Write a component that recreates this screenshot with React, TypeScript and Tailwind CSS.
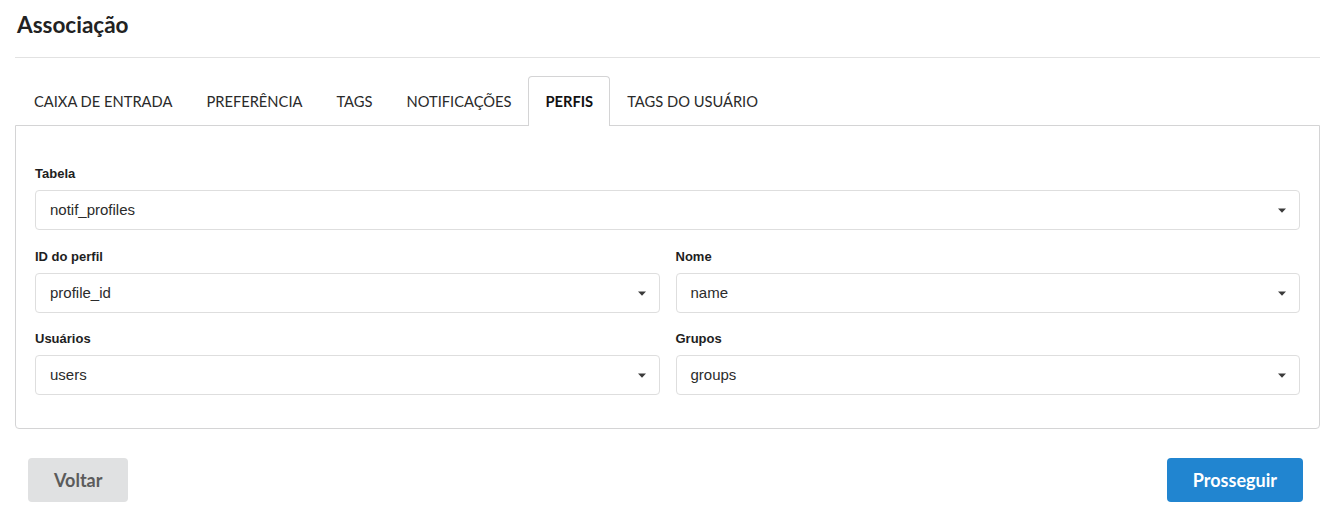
import React from 'react'

const tabs = ['CAIXA DE ENTRADA', 'PREFERÊNCIA', 'TAGS', 'NOTIFICAÇÕES', 'PERFIS', 'TAGS DO USUÁRIO']

const Caret = () => (
  <svg width="8" height="5" viewBox="0 0 8 5" className="shrink-0">
    <path d="M0 0.5 H8 L4 4.8 Z" fill="#3a3a3a" />
  </svg>
)

const SelectField: React.FC<{ label: string; value: string }> = ({ label, value }) => (
  <div className="flex flex-col">
    <label className="text-[13px] leading-[16px] font-bold text-[#1e1e1e] mb-[8px]">{label}</label>
    <div className="h-[40px] flex items-center justify-between border border-[#dedede] rounded-[4px] pl-[14px] pr-[13px] bg-white">
      <span className="text-[15px] text-[#2b2b2b]">{value}</span>
      <Caret />
    </div>
  </div>
)

const App: React.FC = () => {
  const active = 'PERFIS'

  return (
    <div className="w-[1331px] h-[517px] bg-white pl-[15px] pr-[11px] pt-[11px]" style={{ fontFamily: 'Lato, "Liberation Sans", sans-serif' }}>
      {/* Header */}
      <div className="pl-[2px] pb-[18px] border-b border-[#e2e2e2]">
        <h1 className="text-[22.5px] leading-[28px] font-bold text-[#222]">Associação</h1>
      </div>

      {/* Tabs */}
      <div className="flex pl-[2px] mt-[18px] relative z-10">
        {tabs.map((t) => (
          <div
            key={t}
            className={`h-[50px] px-[16px] flex items-center text-[14.7px] border border-b-0 rounded-t-[4px] ${
              t === active
                ? 'border-[#d4d4d5] bg-white font-bold text-[#111]'
                : 'border-transparent text-[#2a2a2a]'
            }`}
          >
            {t}
          </div>
        ))}
      </div>

      {/* Panel */}
      <div
        className="-mt-px border border-[#d4d4d5] rounded-b-[4px] pt-[40px] px-[19px] pb-[33px]"
        style={{ fontFamily: '"Liberation Sans", Arial, sans-serif' }}
      >
        <SelectField label="Tabela" value="notif_profiles" />
        <div className="grid grid-cols-2 gap-x-[16px] gap-y-[18px] mt-[19px]">
          <SelectField label="ID do perfil" value="profile_id" />
          <SelectField label="Nome" value="name" />
          <SelectField label="Usuários" value="users" />
          <SelectField label="Grupos" value="groups" />
        </div>
      </div>

      {/* Actions */}
      <div className="flex justify-between pl-[13px] pr-[17px] mt-[29px]">
        <button className="h-[44px] px-[26px] rounded-[4px] bg-[#e0e1e2] text-[#5b5b5b] text-[18px] font-bold">
          Voltar
        </button>
        <button className="h-[44px] px-[26px] rounded-[4px] bg-[#2185d0] text-white text-[18px] font-bold">
          Prosseguir
        </button>
      </div>
    </div>
  )
}

export default App
